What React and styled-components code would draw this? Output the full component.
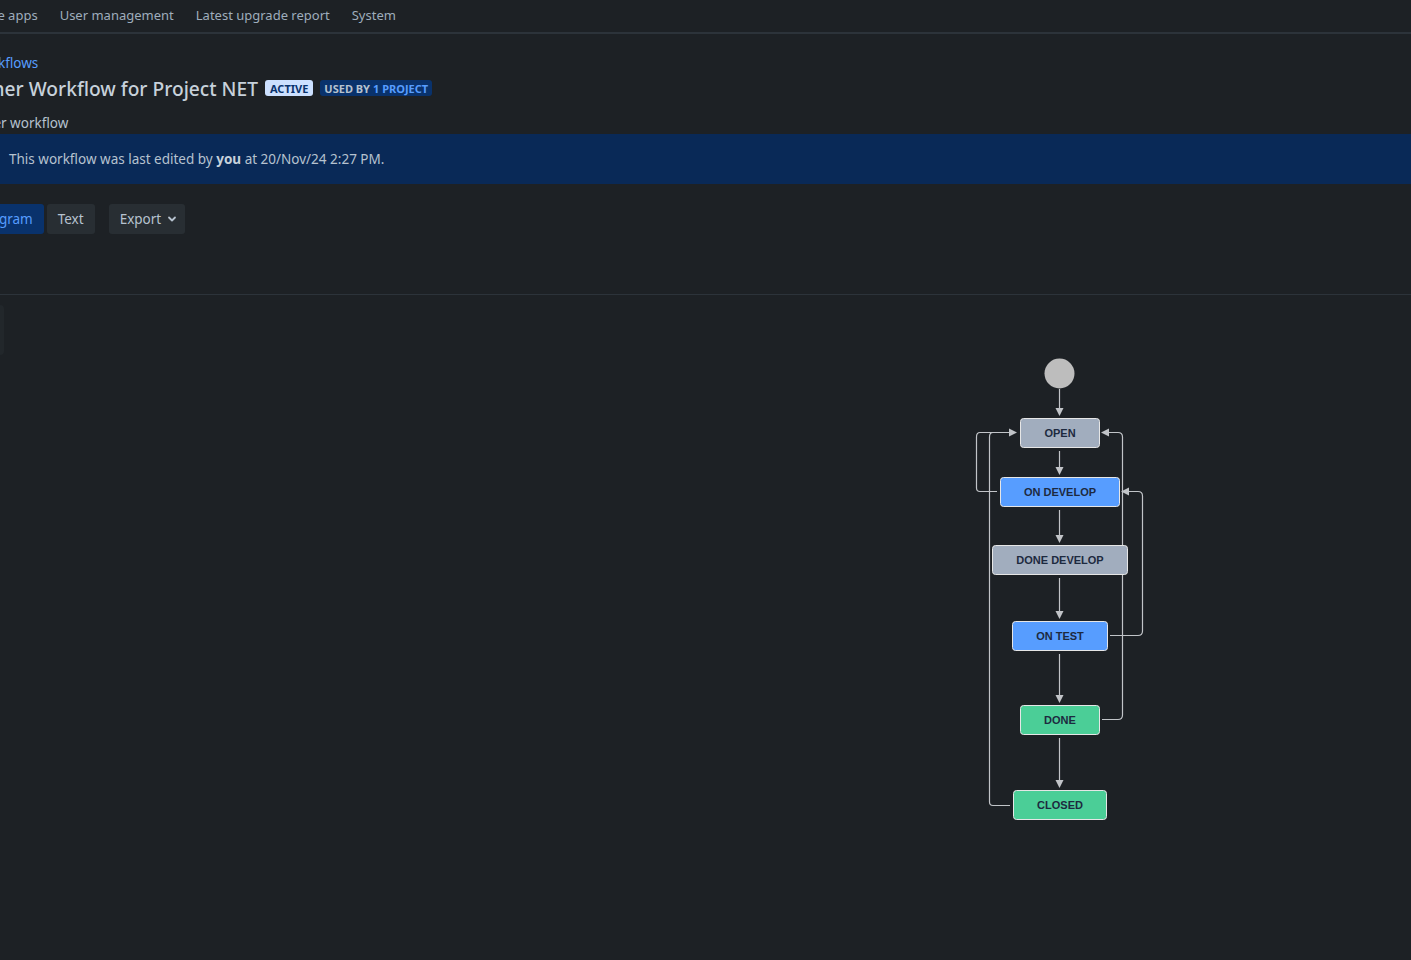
import React from 'react';
import styled, { createGlobalStyle } from 'styled-components';

const GlobalStyle = createGlobalStyle`
  html, body {
    margin: 0;
    padding: 0;
    background: #1d2125;
  }
  body {
    font-family: "Noto Sans", "Open Sans", sans-serif;
    font-size: 13.5px;
    color: #b6c2cf;
  }
`;

// the page is scrolled sideways, so the left column starts off-screen
const SHIFT = 28;

const Viewport = styled.div`
  width: 1411px;
  height: 960px;
  overflow: hidden;
  display: flex;
  flex-direction: column;
  background: #1d2125;
`;

const TopNav = styled.nav`
  height: 32px;
  border-bottom: 2px solid #2c333a;
  display: flex;
  align-items: center;
  gap: 22px;
  white-space: nowrap;
  & > :first-child {
    margin-left: -45px;
  }
`;

const NavItem = styled.a`
  color: #9fadbc;
  font-size: 13px;
  line-height: 20px;
  margin-top: -2px;
  text-decoration: none;
`;

const Header = styled.header`
  margin-left: -${SHIFT}px;
  padding-top: 19px;
  display: flex;
  flex-direction: column;
  white-space: nowrap;
`;

const Crumb = styled.a`
  color: #579dff;
  line-height: 20px;
  text-decoration: none;
`;

const TitleRow = styled.div`
  margin-top: 2px;
  margin-left: -10px;
  display: flex;
  align-items: center;
  gap: 7px;
  height: 28px;
`;

const Title = styled.h1`
  margin: 0;
  font-size: 19.2px;
  font-weight: 500;
  line-height: 28px;
  color: #c7d1db;
`;

const Lozenge = styled.span`
  display: inline-flex;
  align-items: center;
  height: 16px;
  padding: 0 ${props => (props.dark ? 4 : 5)}px;
  border-radius: 3px;
  font-size: 11px;
  font-weight: 700;
  text-transform: uppercase;
  background: ${props => (props.dark ? '#09326c' : '#cce0ff')};
  color: ${props => (props.dark ? '#b6c2cf' : '#09326c')};
  margin-top: -2px;
`;

const LozengeAccent = styled.span`
  color: #579dff;
  margin-left: 3px;
`;

const Description = styled.p`
  margin: 10px 0 0 4px;
  line-height: 20px;
`;

const Banner = styled.div`
  margin-top: 1px;
  height: 50px;
  background: #092957;
  display: flex;
  align-items: center;
  padding-left: 9px;
  color: #b6c2cf;
  white-space: pre;
  b {
    font-weight: 700;
    color: #c7d1db;
  }
`;

const Toolbar = styled.div`
  margin-top: 20px;
  height: 90px;
  display: flex;
  align-items: flex-start;
  border-bottom: 1px solid #2c333a;
`;

const Segmented = styled.div`
  display: flex;
  gap: 3px;
  margin-left: -33px;
  margin-right: 14px;
`;

const Button = styled.button`
  height: 30px;
  border: none;
  border-radius: 3px;
  padding: 0 ${props => (props.menu ? 8 : 11)}px 0 11px;
  font-family: inherit;
  font-size: 13.5px;
  display: inline-flex;
  align-items: center;
  gap: 6px;
  background: ${props => (props.selected ? '#09326c' : '#282e33')};
  color: ${props => (props.selected ? '#579dff' : '#b6c2cf')};
`;

const Canvas = styled.div`
  position: relative;
  flex: 1;
  overflow: hidden;
`;

const ZoomPanel = styled.div`
  position: absolute;
  top: 10px;
  left: -8px;
  width: 12px;
  height: 50px;
  border-radius: 4px;
  background: #22272b;
`;

const Diagram = styled.svg`
  position: absolute;
  top: 0;
  left: 0;
`;

const nodes = [
  { label: 'OPEN', x: 1020, y: 418, w: 79, fill: '#a1adbe' },
  { label: 'ON DEVELOP', x: 1000, y: 477, w: 119, fill: '#579dff' },
  { label: 'DONE DEVELOP', x: 992, y: 545, w: 135, fill: '#a1adbe' },
  { label: 'ON TEST', x: 1012, y: 621, w: 95, fill: '#579dff' },
  { label: 'DONE', x: 1020, y: 705, w: 79, fill: '#4bce97' },
  { label: 'CLOSED', x: 1013, y: 790, w: 93, fill: '#4bce97' }
];

const LINE = '#c1c4c8';

const Arrow = ({ x, y, dir }) => {
  const pts = {
    down: `${x - 4},${y - 8} ${x + 4},${y - 8} ${x},${y}`,
    right: `${x - 8},${y - 4} ${x - 8},${y + 4} ${x},${y}`,
    left: `${x + 8},${y - 4} ${x + 8},${y + 4} ${x},${y}`
  }[dir];
  return <polygon points={pts} fill={LINE} />;
};

const Workflow = () => (
  <Diagram width="1411" height="665" viewBox="0 295 1411 665">
    <circle cx="1059.5" cy="373.5" r="15" fill="#bdbdbd" />
    <g stroke={LINE} strokeWidth="1.2" fill="none">
      <line x1="1059.5" y1="389" x2="1059.5" y2="410" />
      <line x1="1059.5" y1="451" x2="1059.5" y2="469" />
      <line x1="1059.5" y1="510" x2="1059.5" y2="537" />
      <line x1="1059.5" y1="578" x2="1059.5" y2="613" />
      <line x1="1059.5" y1="654" x2="1059.5" y2="697" />
      <line x1="1059.5" y1="738" x2="1059.5" y2="782" />
      <path d="M997 491.5 H980 Q976.5 491.5 976.5 488 V437 Q976.5 432.5 980 432.5 H1010" />
      <path d="M1010 805.5 H993 Q989.5 805.5 989.5 802 V437 Q989.5 432.5 993 432.5" />
      <path d="M1102 719.5 H1118 Q1122.5 719.5 1122.5 715 V437 Q1122.5 432.5 1118 432.5 H1109" />
      <path d="M1110 635.5 H1138 Q1142.5 635.5 1142.5 631 V496 Q1142.5 491.5 1138 491.5 H1129" />
    </g>
    <Arrow x={1059.5} y={416} dir="down" />
    <Arrow x={1059.5} y={475} dir="down" />
    <Arrow x={1059.5} y={543} dir="down" />
    <Arrow x={1059.5} y={619} dir="down" />
    <Arrow x={1059.5} y={703} dir="down" />
    <Arrow x={1059.5} y={788} dir="down" />
    <Arrow x={1017} y={432.5} dir="right" />
    <Arrow x={1101} y={432.5} dir="left" />
    <Arrow x={1121} y={491.5} dir="left" />
    {nodes.map(n => (
      <g key={n.label}>
        <rect
          x={n.x + 0.5}
          y={n.y + 0.5}
          width={n.w}
          height="29"
          rx="3"
          fill={n.fill}
          stroke="#e6e6e6"
          strokeWidth="1"
        />
        <text
          x={n.x + 0.5 + n.w / 2}
          y={n.y + 19}
          textAnchor="middle"
          fontFamily='"Liberation Sans", Arial, sans-serif'
          fontSize="11"
          fontWeight="700"
          fill="#1d2a3f"
        >
          {n.label}
        </text>
      </g>
    ))}
  </Diagram>
);

const ChevronDown = () => (
  <svg width="10" height="10" viewBox="0 0 10 10">
    <path
      d="M2 3.5 L5 6.5 L8 3.5"
      stroke="#b6c2cf"
      strokeWidth="1.8"
      fill="none"
      strokeLinecap="round"
      strokeLinejoin="round"
    />
  </svg>
);

const App = () => (
  <>
    <GlobalStyle />
    <Viewport>
      <TopNav>
        <NavItem>Manage apps</NavItem>
        <NavItem>User management</NavItem>
        <NavItem>Latest upgrade report</NavItem>
        <NavItem>System</NavItem>
      </TopNav>
      <Header>
        <Crumb>Workflows</Crumb>
        <TitleRow>
          <Title>Owner Workflow for Project NET</Title>
          <Lozenge>Active</Lozenge>
          <Lozenge dark>
            Used by<LozengeAccent>1 project</LozengeAccent>
          </Lozenge>
        </TitleRow>
        <Description>Over workflow</Description>
      </Header>
      <Banner>
        This workflow was last edited by <b>you</b> at 20/Nov/24 2:27 PM.
      </Banner>
      <Toolbar>
        <Segmented>
          <Button selected>Diagram</Button>
          <Button>Text</Button>
        </Segmented>
        <Button menu>
          Export
          <ChevronDown />
        </Button>
      </Toolbar>
      <Canvas>
        <ZoomPanel />
        <Workflow />
      </Canvas>
    </Viewport>
  </>
);

export default App;
